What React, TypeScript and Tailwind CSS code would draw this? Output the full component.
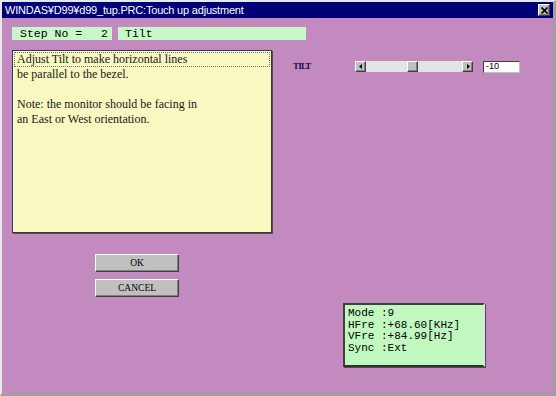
import React from "react";

const serif = { fontFamily: '"Liberation Serif", "Times New Roman", serif' };
const mono = { fontFamily: '"Liberation Mono", "Courier New", monospace' };
const sans = { fontFamily: '"Liberation Sans", Arial, sans-serif' };

// raised 3d grey look (win9x button)
const raised =
    "bg-[#c0c0c0] border border-t-white border-l-white border-r-[#404040] border-b-[#404040] shadow-[inset_-1px_-1px_0_#808080]";

function ArrowButton({ dir }: { dir: "left" | "right" }) {
    return (
        <div className={`w-[11px] h-[11px] flex items-center justify-center ${raised}`}>
            <svg width="4" height="5" viewBox="0 0 4 5">
                {dir === "left" ? <path d="M3 0 L3 5 L0 2.5 Z" fill="#000" /> : <path d="M1 0 L1 5 L4 2.5 Z" fill="#000" />}
            </svg>
        </div>
    );
}

export default function App() {
    const infoLines = ["Mode :9", "HFre :+68.60[KHz]", "VFre :+84.99[Hz]", "Sync :Ext"];

    return (
        <div className="w-[556px] h-[396px] flex flex-col bg-[#c28abe] border-l-2 border-t-2 border-l-[#e8e8e8] border-t-[#e8e8e8] border-r-[3px] border-b-[3px] border-r-[#a0a0a0] border-b-[#a0a0a0] overflow-hidden">
            {/* title bar */}
            <div className="h-[16px] bg-[#000078] flex flex-row items-center justify-between pl-[3px] pr-[3px]">
                <span className="text-white text-[11px] leading-none tracking-[-0.2px]" style={sans}>
                    WINDAS¥D99¥d99_tup.PRC:Touch up adjustment
                </span>
                <div className={`w-[12px] h-[12px] flex items-center justify-center ${raised}`}>
                    <svg width="7" height="7" viewBox="0 0 7 7">
                        <path d="M0.5 0.5 L6.5 6.5 M6.5 0.5 L0.5 6.5" stroke="#000" strokeWidth="1.6" />
                    </svg>
                </div>
            </div>

            {/* step row */}
            <div className="mt-[9px] ml-[10px] flex flex-row gap-[6px]">
                <div className="w-[100px] h-[13px] bg-[#c8f8c8] flex flex-row items-center justify-between pl-[8px] pr-[4px] text-[11.5px] leading-none text-black" style={mono}>
                    <span>Step No =</span>
                    <span>2</span>
                </div>
                <div className="w-[188px] h-[13px] bg-[#c8f8c8] flex flex-row items-center pl-[7px] text-[11.5px] leading-none text-black" style={mono}>
                    Tilt
                </div>
            </div>

            <div className="mt-[10px] flex flex-row">
                {/* left column */}
                <div className="ml-[10px] flex flex-col">
                    <div className="w-[260px] h-[183px] bg-[#f8f8c0] border border-[#383838] shadow-[1px_1px_0_#505050,inset_1px_1px_0_#ffffff] p-[1px] text-[12px] leading-[15px] text-[#202020]" style={serif}>
                        <div className="border border-dotted border-[#707070] h-[15px] pl-[2px] leading-[13px]">
                            Adjust Tilt to make horizontal lines
                        </div>
                        <div className="pl-[3px]">be parallel to the bezel.</div>
                        <div className="pl-[3px] h-[15px]"></div>
                        <div className="pl-[3px]">Note: the monitor should be facing in</div>
                        <div className="pl-[3px]">an East or West orientation.</div>
                    </div>

                    <div className="ml-[83px] mt-[21px] flex flex-col gap-[7px]">
                        <div className={`w-[84px] h-[18px] flex items-center justify-center text-[9.5px] text-black ${raised}`} style={serif}>
                            OK
                        </div>
                        <div className={`w-[84px] h-[18px] flex items-center justify-center text-[9.5px] text-black ${raised}`} style={serif}>
                            CANCEL
                        </div>
                    </div>
                </div>

                {/* right column */}
                <div className="ml-[21px] pt-[11px] flex flex-col">
                    <div className="flex flex-row items-center h-[11px]">
                        <span className="w-[62px] text-[9px] font-bold leading-none tracking-[-0.8px] text-[#10104a]" style={serif}>
                            TILT
                        </span>
                        <div className="w-[118px] h-[11px] flex flex-row bg-[#e4e4e4]">
                            <ArrowButton dir="left" />
                            <div className="flex-1 flex flex-row">
                                <div className="w-[41px]"></div>
                                <div className={`w-[11px] h-[11px] ${raised}`}></div>
                            </div>
                            <ArrowButton dir="right" />
                        </div>
                        <div className="ml-[10px] w-[37px] h-[12px] bg-white border border-[#404040] border-r-[#c0c0c0] border-b-[#c0c0c0] flex items-center pl-[2px] text-[9px] leading-none text-black" style={sans}>
                            -10
                        </div>
                    </div>

                    <div className="mt-[231px] ml-[50px] w-[142px] h-[64px] bg-[#c0f8c0] border-2 border-t-[#404040] border-l-[#404040] border-r-[#e0e0e0] border-b-[#303030] shadow-[1px_1px_0_#505050] pl-[3px] pt-[3px] text-[11px] leading-[11.5px] text-black" style={mono}>
                        {infoLines.map((line) => (
                            <div key={line} className="whitespace-pre">{line}</div>
                        ))}
                    </div>
                </div>
            </div>
        </div>
    );
}
